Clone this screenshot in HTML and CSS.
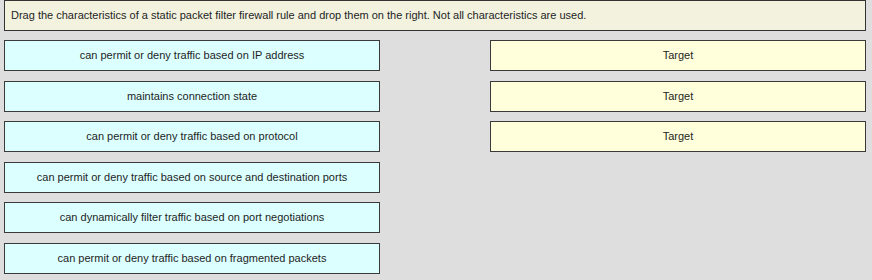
FILE: index.html
```html
<!DOCTYPE html>
<html lang="en">
<head>
  <meta charset="UTF-8">
  <title>Drag and Drop</title>
  <link rel="stylesheet" href="styles.css">
</head>
<body>
  <div class="instructions">Drag the characteristics of a static packet filter firewall rule and drop them on the right. Not all characteristics are used.</div>

  <div class="board">
    <div class="column">
      <div class="item">can permit or deny traffic based on IP address</div>
      <div class="item">maintains connection state</div>
      <div class="item">can permit or deny traffic based on protocol</div>
      <div class="item">can permit or deny traffic based on source and destination ports</div>
      <div class="item">can dynamically filter traffic based on port negotiations</div>
      <div class="item">can permit or deny traffic based on fragmented packets</div>
    </div>
    <div class="column">
      <div class="target">Target</div>
      <div class="target">Target</div>
      <div class="target">Target</div>
    </div>
  </div>
</body>
</html>
```

FILE: styles.css
```css
body {
  margin: 0;
  padding: 0 6px 0 4px;
  background-color: #dedede;
  font-family: "Liberation Sans", Arial, sans-serif;
  font-size: 11px;
  color: #1e1e1e;
}

/* Instructions */
.instructions {
  height: 29px;
  line-height: 29px;
  padding-left: 6px;
  background-color: #f2f2de;
  border: 1px solid #333;
}

/* Board */
.board {
  display: grid;
  grid-template-columns: 376px 376px;
  column-gap: 110px;
  margin-top: 9px;
}

.column {
  display: flex;
  flex-direction: column;
  gap: 9.6px;
}

.item,
.target {
  height: 29px;
  line-height: 28px;
  text-align: center;
  border: 1px solid #3a3a3a;
}

.item {
  background-color: #dcffff;
}

.target {
  background-color: #ffffdc;
  line-height: 29px;
}
```
